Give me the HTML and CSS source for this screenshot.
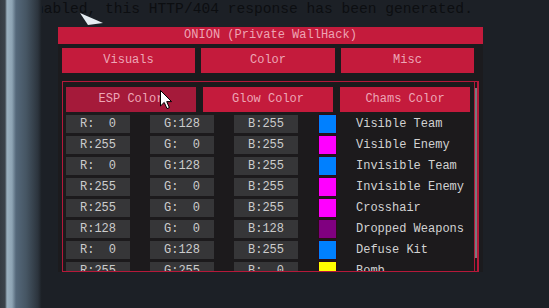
FILE: index.html
```html
<!DOCTYPE html>
<html>
<head>
    <title>ONION (Private WallHack)</title>
    <link rel="stylesheet" href="styles.css">
</head>
<body>
    <div class="screen">
        <div class="strip"></div>
        <div class="desk">
            <div class="bg-text">nabled, this HTTP/404 response has been generated.</div>
            <svg class="bg-arrow" width="26" height="14" viewBox="0 0 26 14"><polygon points="0,0 23,10 8,12" fill="#e6edf2"/></svg>

            <div class="window">
                <div class="title">ONION (Private WallHack)</div>

                <!-- Main tabs -->
                <div class="tabs">
                    <div class="btn">Visuals</div>
                    <div class="btn">Color</div>
                    <div class="btn">Misc</div>
                </div>

                <!-- Color child window -->
                <div class="frame">
                    <div class="frame-body">
                        <div class="subtabs">
                            <div class="btn active">ESP Color</div>
                            <div class="btn">Glow Color</div>
                            <div class="btn">Chams Color</div>
                        </div>
                        <div class="rows">
                            <div class="row"><span class="val">R:  0</span><span class="val">G:128</span><span class="val">B:255</span><span class="swatch" style="background:#0080ff"></span><span class="name">Visible Team</span></div>
                            <div class="row"><span class="val">R:255</span><span class="val">G:  0</span><span class="val">B:255</span><span class="swatch" style="background:#ff00ff"></span><span class="name">Visible Enemy</span></div>
                            <div class="row"><span class="val">R:  0</span><span class="val">G:128</span><span class="val">B:255</span><span class="swatch" style="background:#0080ff"></span><span class="name">Invisible Team</span></div>
                            <div class="row"><span class="val">R:255</span><span class="val">G:  0</span><span class="val">B:255</span><span class="swatch" style="background:#ff00ff"></span><span class="name">Invisible Enemy</span></div>
                            <div class="row"><span class="val">R:255</span><span class="val">G:  0</span><span class="val">B:255</span><span class="swatch" style="background:#ff00ff"></span><span class="name">Crosshair</span></div>
                            <div class="row"><span class="val">R:128</span><span class="val">G:  0</span><span class="val">B:128</span><span class="swatch" style="background:#800080"></span><span class="name">Dropped Weapons</span></div>
                            <div class="row"><span class="val">R:  0</span><span class="val">G:128</span><span class="val">B:255</span><span class="swatch" style="background:#0080ff"></span><span class="name">Defuse Kit</span></div>
                            <div class="row"><span class="val">R:255</span><span class="val">G:255</span><span class="val">B:  0</span><span class="swatch" style="background:#ffff00"></span><span class="name">Bomb</span></div>
                        </div>
                    </div>
                    <div class="scrollbar"><div class="thumb"></div></div>
                </div>
            </div>

            <!-- mouse cursor -->
            <svg class="cursor" width="13" height="20" viewBox="0 0 13 20"><path d="M0.5 0.5 L0.5 16 L4.2 12.4 L7 18.6 L9.4 17.6 L6.7 11.6 L11.6 11.6 Z" fill="#ffffff" stroke="#000000" stroke-width="1"/></svg>
        </div>
    </div>
</body>
</html>
```

FILE: styles.css
```css
body { margin: 0; background: #1c2026; font-family: "Liberation Mono", "DejaVu Sans Mono", monospace; }
.screen { display: flex; height: 308px; overflow: hidden; }
.strip { width: 42px; flex: none; background: linear-gradient(to right, #353b42 0, #3c434b 5px, #9bb0bf 7px, #8ea4b4 12px, #55687a 16px, #465664 26px, #2c343d 38px, #1a1e23 42px); }
.desk { position: relative; flex: 1; overflow: hidden; background: #1c2026; }
.bg-text { margin-left: -7px; height: 18px; line-height: 18px; font-size: 14.6px; color: #0c0e11; white-space: pre; }
.bg-arrow { position: absolute; left: 38px; top: 13px; }

.window { position: relative; margin: 9px 0 0 16px; width: 425px; height: 245px; background: #1b1b1e; }
.title { height: 17px; line-height: 17px; background: #c41b3c; color: #eea4b4; font-size: 12px; text-align: center; white-space: pre; }
.btn { height: 25px; line-height: 25px; background: #c41b3c; color: #eda6b6; font-size: 12px; text-align: center; white-space: pre; }
.btn.active { background: #a51a3a; }
.tabs { display: grid; grid-template-columns: 133px 134px 133px; gap: 6px; margin: 4px 0 0 4px; }

.frame { display: flex; margin: 8px 0 0 4px; width: 415px; height: 189px; border: 1px solid #b5193a; background: #1c1a1c; overflow: hidden; }
.frame-body { flex: 1; padding: 5px 0 0 3px; }
.subtabs { display: grid; grid-template-columns: repeat(3, 130px); gap: 7px; }
.rows { display: flex; flex-direction: column; gap: 3px; margin-top: 3px; }
.row { display: grid; grid-template-columns: 64px 64px 64px 18px 1fr; column-gap: 20px; height: 18px; }
.val { background: #363638; color: #cccccc; font-size: 12px; line-height: 18px; text-align: center; white-space: pre; }
.swatch { margin-left: 1px; box-shadow: 0 0 0 1px #2a0d18; }
.name { color: #d2d2d2; font-size: 12px; line-height: 18px; white-space: pre; }

.scrollbar { position: relative; width: 2px; border-left: 1px solid #b5193a; border-right: 1px solid #b5193a; }
.thumb { position: absolute; left: 0; top: 6px; width: 2px; height: 170px; background: #7a7a7e; }

.cursor { position: absolute; left: 118px; top: 90px; }
```
